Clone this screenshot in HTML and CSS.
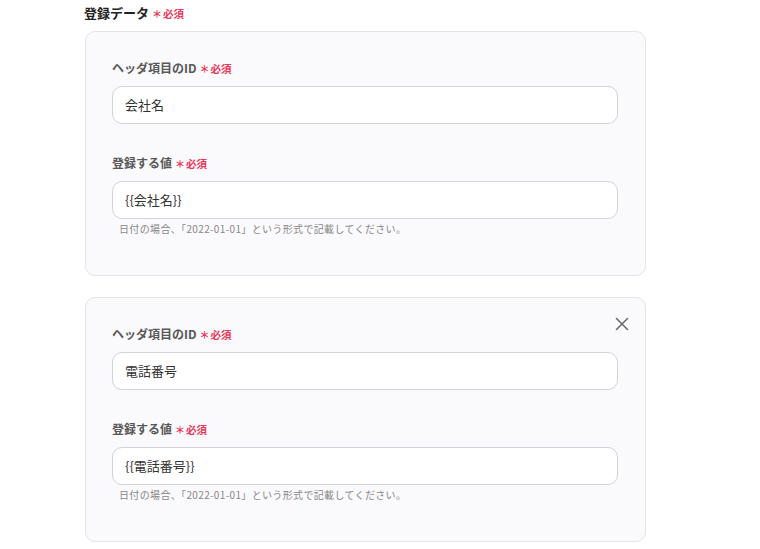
FILE: index.html
```html
<!DOCTYPE html>
<html lang="ja">
<head>
<meta charset="utf-8">
<link rel="stylesheet" href="styles.css">
</head>
<body>
<div class="page">
  <div class="title">登録データ<span class="req"><span class="ast">＊</span>必須</span></div>

  <div class="card">
    <div class="field">
      <div class="label">ヘッダ項目のID<span class="req"><span class="ast">＊</span>必須</span></div>
      <div class="input">会社名</div>
    </div>
    <div class="field second">
      <div class="label">登録する値<span class="req"><span class="ast">＊</span>必須</span></div>
      <div class="input">{{会社名}}</div>
      <div class="help">日付の場合、「2022-01-01」という形式で記載してください。</div>
    </div>
  </div>

  <div class="card closable">
    <button class="close" aria-label="close">
      <svg width="14" height="14" viewBox="0 0 14 14"><path d="M1.5 1.5L12.5 12.5M12.5 1.5L1.5 12.5" stroke="#6b6b6b" stroke-width="1.6" stroke-linecap="round" fill="none"/></svg>
    </button>
    <div class="field">
      <div class="label">ヘッダ項目のID<span class="req"><span class="ast">＊</span>必須</span></div>
      <div class="input">電話番号</div>
    </div>
    <div class="field second">
      <div class="label">登録する値<span class="req"><span class="ast">＊</span>必須</span></div>
      <div class="input">{{電話番号}}</div>
      <div class="help">日付の場合、「2022-01-01」という形式で記載してください。</div>
    </div>
  </div>
</div>
</body>
</html>
```

FILE: styles.css
```css
html, body {
  margin: 0;
  padding: 0;
  background: #ffffff;
}
body {
  font-family: "Noto Sans CJK JP", "Noto Sans", sans-serif;
  color: #333;
}
.page {
  padding: 4px 0 0 84px;
  width: 562px;
}
.title {
  font-size: 13px;
  font-weight: bold;
  line-height: 18px;
  color: #222;
  margin-bottom: 8px;
}
.req {
  color: #e8395a;
  font-size: 10.5px;
  font-weight: bold;
  margin-left: 3px;
}
.ast {
  font-size: 10px;
  margin-right: 1px;
}
.card {
  position: relative;
  margin-left: 1px;
  background: #faf9fc;
  border: 1px solid #e4e3e9;
  border-radius: 10px;
  padding: 27px 27px 39px 26px;
  margin-bottom: 21px;
}
.label {
  font-size: 12px;
  font-weight: bold;
  line-height: 18px;
  color: #585858;
  margin-bottom: 8px;
}
.field.second {
  margin-top: 30px;
}
.input {
  height: 36px;
  box-sizing: content-box;
  border: 1px solid #d3d2dc;
  border-radius: 10px;
  background: #fff;
  padding: 0 12px;
  font-size: 13px;
  line-height: 36px;
  color: #333;
}
.help {
  font-size: 10px;
  letter-spacing: 0.35px;
  line-height: 14px;
  color: #888;
  margin-top: 3px;
  padding-left: 7px;
}
.close {
  position: absolute;
  top: 19px;
  right: 16px;
  width: 14px;
  height: 14px;
  padding: 0;
  border: 0;
  background: transparent;
  display: flex;
}
```
